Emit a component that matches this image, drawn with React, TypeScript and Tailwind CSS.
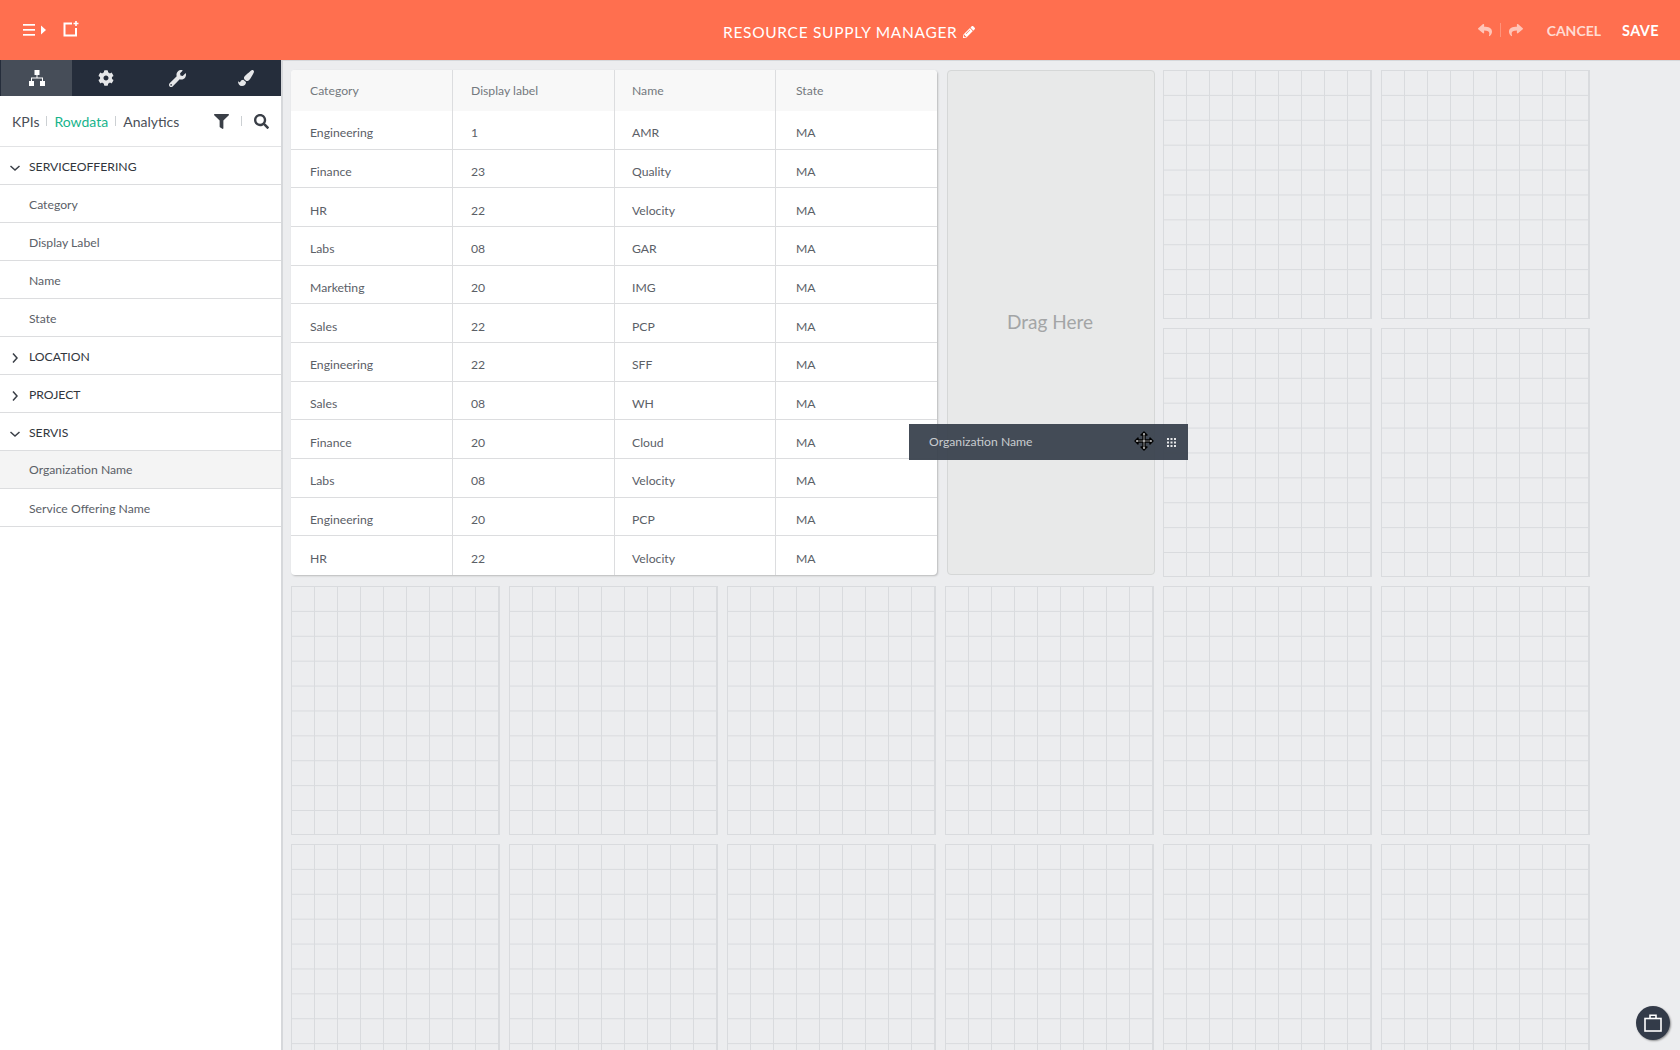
import { FaCog, FaFilter, FaPaintBrush, FaPencilAlt, FaReply, FaSearch, FaShare, FaWrench } from "react-icons/fa";

const rows = [
  ["Engineering", "1", "AMR"],
  ["Finance", "23", "Quality"],
  ["HR", "22", "Velocity"],
  ["Labs", "08", "GAR"],
  ["Marketing", "20", "IMG"],
  ["Sales", "22", "PCP"],
  ["Engineering", "22", "SFF"],
  ["Sales", "08", "WH"],
  ["Finance", "20", "Cloud"],
  ["Labs", "08", "Velocity"],
  ["Engineering", "20", "PCP"],
  ["HR", "22", "Velocity"],
];

const tree = [
  { label: "SERVICEOFFERING", open: true, items: ["Category", "Display Label", "Name", "State"] },
  { label: "LOCATION", open: false, items: [] },
  { label: "PROJECT", open: false, items: [] },
  { label: "SERVIS", open: true, items: ["Organization Name", "Service Offering Name"] },
];

// left padding of each table column
const colPad = ["pl-[19px]", "pl-[18px]", "pl-[17px]", "pl-[20px]"];

const Chevron = ({ open }: { open: boolean }) => (
  <svg width="12" height="12" viewBox="0 0 12 12" fill="none" stroke="#3a3f47" strokeWidth="1.5" className="shrink-0">
    {open ? <path d="M1.5 4l4.5 4 4.5-4" /> : <path d="M4 1.5l4 4.5-4 4.5" />}
  </svg>
);

const GridCard = () => (
  <div className="border-r border-b border-[#d9dbde] bg-[linear-gradient(to_right,#d9dbde_1px,transparent_1px),linear-gradient(to_bottom,#d9dbde_1px,transparent_1px)] bg-[size:23px_24.9px]" />
);

const Sidebar = () => (
  <aside className="w-[283px] shrink-0 bg-white border-r-2 border-[#d6d8db]">
    <div className="grid grid-cols-[72px_70px_71px_1fr] h-9 bg-[#252d3b] text-[#e6e7e9]">
      <div className="flex items-center justify-center bg-[#464d58] ml-px text-white">
        <svg width="16" height="16" viewBox="0 0 16 16" fill="white">
          <rect x="5.5" y="0" width="5" height="5" />
          <rect x="0" y="11" width="5" height="5" />
          <rect x="11" y="11" width="5" height="5" />
          <path d="M7.5 5h1v2.5h5.5V11h-1V8.5H3V11H2V7.5h5.5z" />
        </svg>
      </div>
      <div className="flex items-center justify-center pr-[2px]"><FaCog size={16} /></div>
      <div className="flex items-center justify-center"><FaWrench size={17} /></div>
      <div className="flex items-center justify-center pr-[2px]"><FaPaintBrush size={16} /></div>
    </div>
    <div className="flex items-center h-[51px] pl-3 pr-[12px] border-b border-[#e2e3e5] text-[14px] text-[#4a4f57]">
      <span>KPIs</span>
      <span className="mx-[7px] h-[10px] w-px bg-[#ccd0d3]" />
      <span className="text-[#17b48c]">Rowdata</span>
      <span className="mx-[7px] h-[10px] w-px bg-[#ccd0d3]" />
      <span>Analytics</span>
      <FaFilter size={15} className="ml-auto text-[#3a3f47]" />
      <span className="mx-[12px] h-[10px] w-px bg-[#ccd0d3]" />
      <FaSearch size={15} className="text-[#3a3f47]" />
    </div>
    {tree.map((group) => (
      <div key={group.label}>
        <div className="flex items-center gap-[8px] h-[38px] pl-[9px] pt-[4px] border-b border-[#dcdddf] text-[12.2px] text-[#31363d]">
          <Chevron open={group.open} />
          <span>{group.label}</span>
        </div>
        {group.items.map((item) => (
          <div
            key={item}
            className={
              item === "Organization Name"
                ? "flex items-center h-[38px] pl-[29px] pt-[1px] border-b border-[#dcdddf] text-[12.2px] text-[#5b6067] bg-[#f4f4f4]"
                : "flex items-center h-[38px] pl-[29px] pt-[3px] border-b border-[#dcdddf] text-[12.2px] text-[#5b6067]"
            }
          >
            {item}
          </div>
        ))}
      </div>
    ))}
  </aside>
);

const DataTable = () => (
  <div className="col-span-3 row-span-2 flex flex-col h-[505px] mr-[-1px] bg-white rounded-[4px] overflow-hidden shadow-[1px_1px_2px_rgba(0,0,0,0.22)] text-[12.2px]">
    <div className="grid grid-cols-[162px_162px_161px_1fr] h-[41px] bg-[#f8f8f8] text-[#74797e]">
      {["Category", "Display label", "Name", "State"].map((h, j) => (
        <div key={h} className={`flex items-center ${colPad[j]} pt-[2px] border-r border-[#dcdddf] last:border-r-0`}>{h}</div>
      ))}
    </div>
    <div className="flex-1 grid grid-rows-12 text-[#5b6067]">
      {rows.map((row, i) => (
        <div key={i} className="grid grid-cols-[162px_162px_161px_1fr] border-b border-[#dcdddf] last:border-b-0">
          {[...row, "MA"].map((cell, j) => (
            <div key={j} className={`flex items-center ${colPad[j]} pt-[7px] border-r border-[#dcdddf] last:border-r-0`}>{cell}</div>
          ))}
        </div>
      ))}
    </div>
  </div>
);

export default function App() {
  return (
    <div className="flex flex-col h-screen overflow-hidden bg-[#ecedef] font-['Lato',sans-serif]">
      <header className="relative flex items-center h-[60px] shrink-0 bg-[#ff6f4f] text-white">
        <div className="flex items-center pl-[23px]">
          <svg width="24" height="14" viewBox="0 0 24 14" fill="white">
            <rect x="0" y="1" width="12" height="1.7" />
            <rect x="0" y="6" width="12" height="1.7" />
            <rect x="0" y="11" width="12" height="1.7" />
            <path d="M18 2.5l5 4.5-5 4.5z" />
          </svg>
          <svg width="16" height="16" viewBox="0 0 16 16" fill="none" stroke="white" strokeWidth="2" className="ml-[16px] mb-[2px]">
            <path d="M9 2.5H1.5v12H13V7" />
            <path d="M13 0v5M10.5 2.5h5" strokeWidth="1.6" />
          </svg>
        </div>
        <div className="absolute left-[723px] top-[23px] flex items-center gap-[6px] text-[15.5px] leading-[18px] tracking-[0.69px]">
          <span>RESOURCE SUPPLY MANAGER</span>
          <FaPencilAlt size={12} />
        </div>
        <div className="ml-auto flex items-center pr-[21px]">
          <FaReply size={14} className="opacity-60" />
          <span className="mx-[8px] h-[14px] w-px bg-white/25" />
          <FaShare size={14} className="opacity-60" />
          <span className="ml-[24px] pt-[1px] text-[14px] leading-[18px] font-bold text-white/75">CANCEL</span>
          <span className="ml-[21px] pt-[1px] text-[14.5px] leading-[18px] font-bold tracking-[0.4px]">SAVE</span>
        </div>
      </header>
      <div className="flex flex-1 min-h-0">
        <Sidebar />
        <main className="relative flex-1 min-w-0 overflow-hidden pl-2 pt-[9px] border-t border-[#d6d8db]">
          <div className="grid grid-cols-[repeat(6,209px)] auto-rows-[249px] gap-[9px]">
            <DataTable />
            <div className="row-span-2 ml-[2px] mr-[-1px] flex items-center justify-center h-[505px] pr-[2px] pb-[1px] bg-[#e8e9e9] border border-[#d5d7d7] rounded-[4px] text-[19px] text-[#a3a5a6]">
              Drag Here
            </div>
            {Array.from({ length: 16 }).map((_, i) => (
              <GridCard key={i} />
            ))}
          </div>
          <div className="absolute left-[626px] top-[363px] flex items-center w-[279px] h-[36px] pl-[20px] bg-[#3a424e]/95 text-[12.2px] text-[#c8cbcf]">
            Organization Name
            <svg width="9" height="9" viewBox="0 0 9 9" fill="#e6e7e9" className="absolute right-[12px] top-[14px]">
              <rect x="0" y="0" width="2" height="2" /><rect x="3.5" y="0" width="2" height="2" /><rect x="7" y="0" width="2" height="2" />
              <rect x="0" y="3.5" width="2" height="2" /><rect x="3.5" y="3.5" width="2" height="2" /><rect x="7" y="3.5" width="2" height="2" />
              <rect x="0" y="7" width="2" height="2" /><rect x="3.5" y="7" width="2" height="2" /><rect x="7" y="7" width="2" height="2" />
            </svg>
            <svg width="20" height="20" viewBox="0 0 20 20" className="absolute left-[225px] top-[7px]">
              <path d="M10 1l3 3h-2v5h5V7l3 3-3 3v-2h-5v5h2l-3 3-3-3h2v-5H4v2l-3-3 3-3v2h5V4H7z" fill="white" stroke="black" strokeWidth="1.4" strokeLinejoin="round" />
            </svg>
          </div>
          <div className="absolute right-[10px] bottom-[10px] flex items-center justify-center w-[34px] h-[34px] rounded-full bg-[#333b49] shadow-[1px_1px_2px_rgba(0,0,0,0.4)]">
            <svg width="18" height="18" viewBox="0 0 18 18" fill="none" stroke="white" strokeWidth="1.6">
              <rect x="1" y="4.5" width="16" height="12.5" />
              <path d="M6 4.5V1.2h6V4.5" />
            </svg>
          </div>
        </main>
      </div>
    </div>
  );
}
